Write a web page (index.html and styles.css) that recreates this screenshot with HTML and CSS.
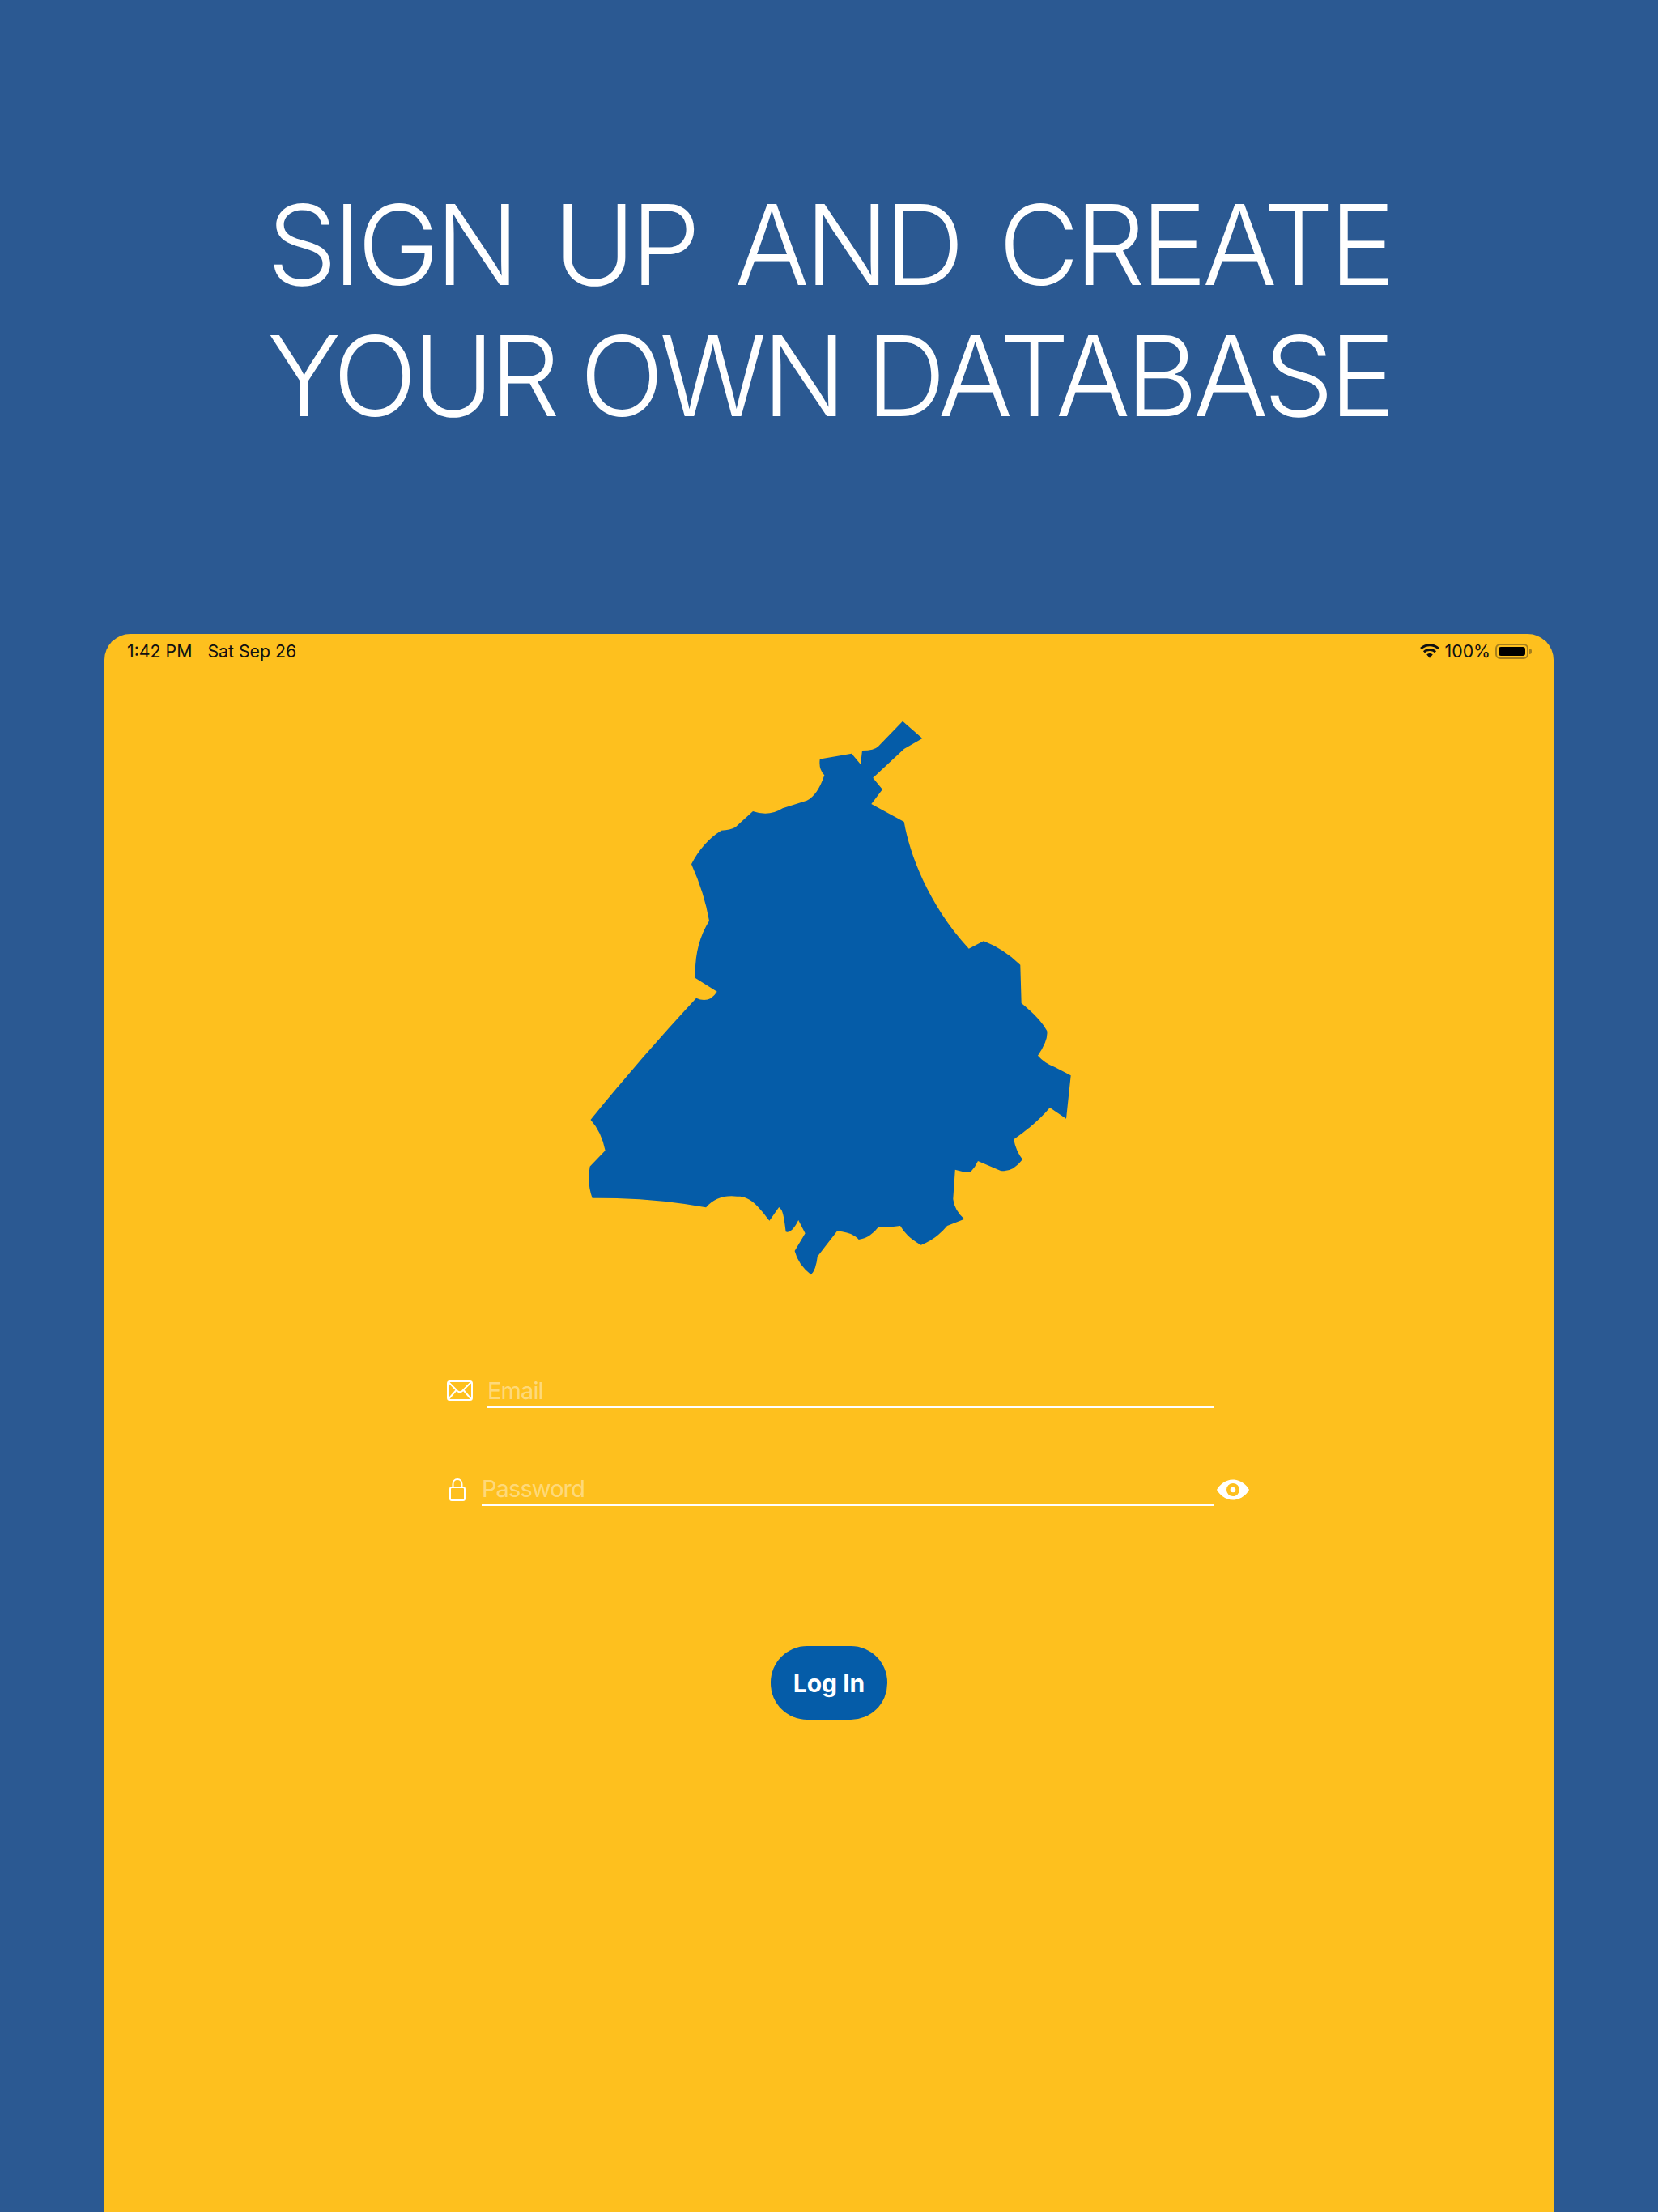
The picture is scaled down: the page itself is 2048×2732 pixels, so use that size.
FILE: index.html
```html
<!DOCTYPE html>
<html lang="en">
<head>
    <meta charset="UTF-8">
    <meta name="viewport" content="width=device-width, initial-scale=1.0">
    <title>Sign Up</title>
    <link rel="stylesheet" href="styles.css">
</head>
<body>

<h1 class="headline">
    <span class="headline-line">SIGN UP AND CREATE</span>
    <span class="headline-line">YOUR OWN DATABASE</span>
</h1>

<div class="device">
    <div class="status-bar">
        <div class="status-left">
            <span>1:42 PM</span>
            <span>Sat Sep 26</span>
        </div>
        <div class="status-right">
            <svg class="wifi" viewBox="2 1.700 20 14.600">
                <path d="M12 4.200c3.200 0 6.100 1.200 8.300 3.200l1.600-1.700C19.300 3.200 15.800 1.700 12 1.700S4.700 3.200 2.100 5.700l1.600 1.700C5.900 5.400 8.800 4.200 12 4.200z"/>
                <path d="M12 9c1.900 0 3.700.7 5 2l1.700-1.700C16.900 7.600 14.600 6.600 12 6.600s-4.900 1-6.700 2.700L7 11c1.300-1.300 3.100-2 5-2z"/>
                <path d="M12 11.500c-1.200 0-2.300.5-3.100 1.200l3.100 3.600 3.100-3.600c-.8-.7-1.900-1.200-3.100-1.200z"/>
            </svg>
            <span>100%</span>
            <div class="battery"><div class="battery-fill"></div></div>
            <div class="battery-nub"></div>
        </div>
    </div>

    <svg class="map" viewBox="719 880 610 700">
        <path d="M1115 890.700 L1139.300 912 L1116.700 925 L1078.300 960.700 L1090 975 L1076.300 993 L1116.700 1015
                 C1123 1052 1145 1115 1196.700 1171.700 L1215 1162.300 Q1240 1172 1260.300 1191.700 L1261.700 1239
                 Q1285 1258 1293.300 1273.300 Q1295 1285 1282 1303.700 Q1290 1313 1303 1318 L1322.700 1328.300
                 L1317 1381.700 L1296.800 1368 Q1280 1388 1252.200 1407.300 Q1255 1422 1263.100 1432
                 Q1250 1449 1235.400 1445.700 L1208 1434 Q1205 1441 1198.700 1447.700 Q1190 1448 1179.800 1444.700
                 L1177.300 1481 Q1179 1495 1191.200 1505.700 L1170 1514 Q1157 1530 1137.700 1537.700
                 Q1120 1528 1112 1514 Q1100 1516 1085.500 1515 Q1075 1529 1060.700 1531 Q1055 1523 1034.200 1520.300
                 L1009.800 1551.700 Q1008 1568 1001.800 1574.300 Q986 1562 981.600 1545 L994.600 1523.300 L986.200 1507
                 Q978 1524 970.600 1521.300 Q968 1498 965 1494 L962.200 1491 L950.400 1507.700
                 C935 1487 925 1477 910.400 1477.700 Q886 1475 872.100 1491.300 Q805 1479 731.600 1479.700
                 Q725 1462 728.600 1440.700 L747.600 1421 Q743 1398 729.500 1383 Q792 1306 860 1232.700
                 Q876 1240 885.700 1224.700 L859 1208 Q857 1168 876 1137.300 Q870 1103 854 1067.300
                 Q868 1040 891 1025.700 Q902 1025 908.300 1021.700 L930 1002 Q950 1009 966.700 998.300 L996.700 988.700
                 Q1010 982 1018.300 957.300 Q1011 950 1012.700 937.700 L1052 930.700 L1063 944 L1065 927
                 Q1080 927 1085 921.700 Z"/>
    </svg>

    <div class="login-form">
        <div class="form-row email-row">
            <svg class="icon-mail" viewBox="0 0 32 25">
                <rect x="1" y="1" width="30" height="23" rx="2.500"/>
                <path d="M2 2 L13 13 Q16 15.500 19 13 L30 2 M2 23 L11.500 12 M30 23 L20.500 12"/>
            </svg>
            <div class="field"><span class="field-placeholder">Email</span></div>
        </div>
        <div class="form-row password-row">
            <svg class="icon-lock" viewBox="0 0 20 28">
                <rect x="1" y="11" width="18" height="16" rx="2"/>
                <path d="M4.500 11 V7 C4.500 3.300 6.800 1 10 1 S15.500 3.300 15.500 7 V11"/>
            </svg>
            <div class="field"><span class="field-placeholder">Password</span></div>
            <svg class="icon-eye" viewBox="0 0 40 26">
                <path fill-rule="evenodd" d="M20 .5 C30 .5 37 7.500 40 13 C37 18.500 30 25.500 20 25.500 S3 18.500 0 13 C3 7.500 10 .5 20 .5 Z M20 5 A8 8 0 1 0 20 21 A8 8 0 1 0 20 5 Z"/>
                <circle cx="20" cy="13" r="3.300"/>
            </svg>
        </div>
    </div>

    <button class="login-btn">Log In</button>
</div>

</body>
</html>
```

FILE: styles.css
```css
html, body {
    height: 2732px;
}

body {
    margin: 0;
    background: #2b5992;
    font-family: Inter, "Liberation Sans", sans-serif;
    overflow: hidden;
}

.headline {
    width: 1388px;
    height: 783px;
    box-sizing: border-box;
    margin: 0 0 0 330px;
    padding-top: 221px;
    color: white;
    font-size: 137px;
    font-weight: 300;
    letter-spacing: -5.500px;
    word-spacing: -9px;
    line-height: 162px;
}

.headline-line {
    display: block;
    white-space: nowrap;
    text-align: justify;
    text-align-last: justify;
}

.device {
    display: flex;
    flex-direction: column;
    align-items: center;
    height: 1949px;
    margin: 0 129px;
    background: #fec01e;
    border-radius: 32px 32px 0 0;
}

.status-bar {
    display: flex;
    justify-content: space-between;
    align-items: center;
    align-self: stretch;
    height: 42px;
    padding: 0 27px 0 28px;
    color: #111;
    font-size: 21.300px;
}

.status-left {
    display: flex;
    gap: 19px;
}

.status-right {
    display: flex;
    align-items: center;
}

.wifi {
    width: 24px;
    height: 18px;
    margin-right: 7px;
    fill: #111;
}

.battery {
    width: 41px;
    height: 19px;
    box-sizing: border-box;
    margin-left: 6px;
    padding: 2px;
    border: 2px solid #a67f1c;
    border-radius: 6px;
}

.battery-fill {
    height: 100%;
    background: black;
    border-radius: 3px;
}

.battery-nub {
    width: 3px;
    height: 7px;
    margin-left: 1px;
    background: #a67f1c;
    border-radius: 0 3px 3px 0;
}

.map {
    width: 610px;
    height: 700px;
    margin-top: 55px;
    fill: #055ca8;
}

.login-form {
    display: flex;
    flex-direction: column;
    gap: 81px;
    align-self: flex-start;
    width: 991px;
    margin: 119px 0 0 423px;
}

.form-row {
    display: flex;
    align-items: center;
    height: 40px;
}

.email-row {
    padding-right: 44px;
}

.field {
    flex: 1;
    height: 38px;
    border-bottom: 2px solid white;
}

.field-placeholder {
    display: block;
    color: rgba(255, 255, 255, 0.42);
    font-size: 29px;
    letter-spacing: -0.900px;
    line-height: 38px;
}

.icon-mail {
    width: 32px;
    height: 25px;
    margin: 0 18px 3px 0;
    fill: none;
    stroke: white;
    stroke-width: 2;
}

.icon-lock {
    width: 20px;
    height: 28px;
    margin: 0 20px 0 3px;
    fill: none;
    stroke: white;
    stroke-width: 2;
}

.icon-eye {
    width: 40px;
    height: 26px;
    margin-left: 4px;
    fill: white;
}

.login-btn {
    width: 144px;
    height: 91px;
    margin-top: 173px;
    padding: 0;
    background: #055ca8;
    color: white;
    border: none;
    border-radius: 45px;
    font-family: inherit;
    font-size: 30px;
    font-weight: 700;
    cursor: pointer;
}
```
